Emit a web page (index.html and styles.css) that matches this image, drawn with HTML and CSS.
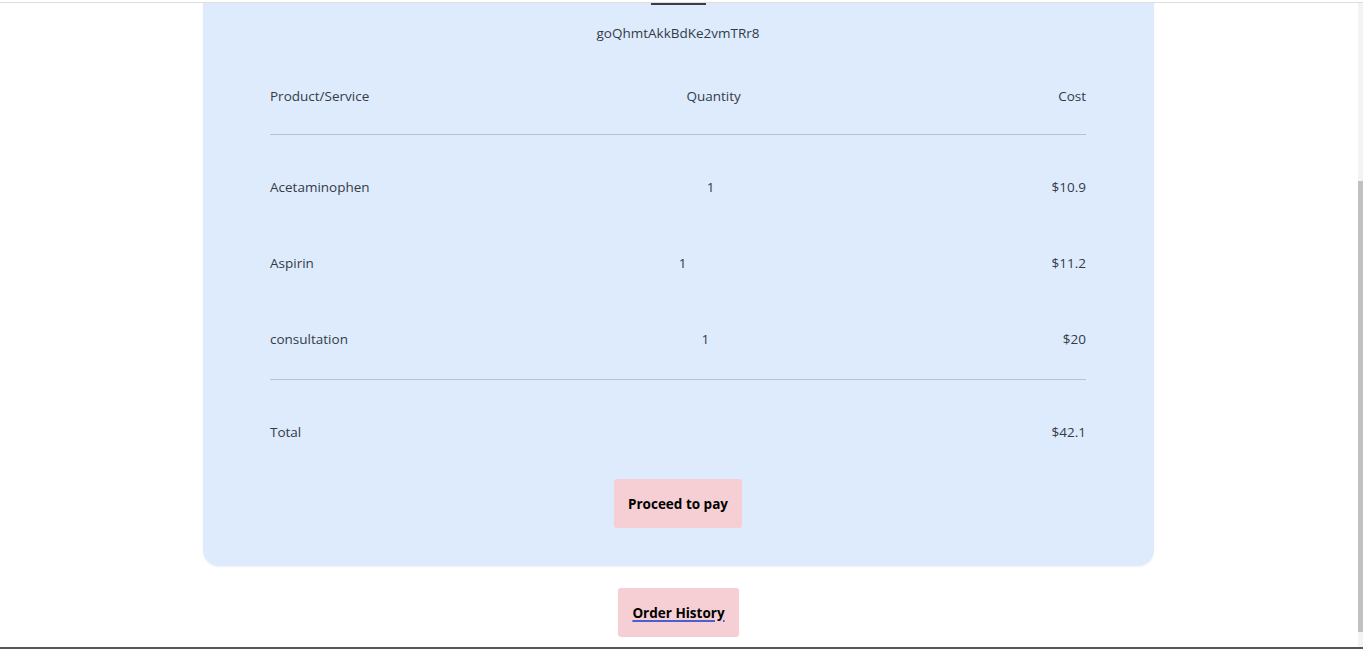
FILE: index.html
```html
<!DOCTYPE html>
<html lang="en">
<head>
<meta charset="utf-8">
<title>Order</title>
<link rel="stylesheet" href="styles.css">
</head>
<body>
<div class="viewport">
  <main class="page">
    <section class="card">
      <div class="title-bar"></div>
      <p class="order-id">goQhmtAkkBdKe2vmTRr8</p>
      <div class="row head">
        <span>Product/Service</span>
        <span>Quantity</span>
        <span>Cost</span>
      </div>
      <div class="items">
        <div class="row item"><span>Acetaminophen</span><span>1</span><span>$10.9</span></div>
        <div class="row item"><span>Aspirin</span><span>1</span><span>$11.2</span></div>
        <div class="row item"><span>consultation</span><span>1</span><span>$20</span></div>
      </div>
      <div class="row total"><span>Total</span><span>$42.1</span></div>
      <button class="btn pay" type="button">Proceed to pay</button>
    </section>
    <a class="btn history" href="#">Order History</a>
  </main>
  <div class="scrollbar"><div class="thumb"></div></div>
</div>
</body>
</html>
```

FILE: styles.css
```css
html, body {
  margin: 0;
  padding: 0;
  background: #ffffff;
  overflow: hidden;
}

body {
  font-family: "Open Sans", "Noto Sans", sans-serif;
  color: #333b46;
}

.viewport {
  position: relative;
  margin-top: 2px;
  height: 644px;
  border-top: 1px solid #dedede;
  border-bottom: 2px solid #555555;
  overflow: hidden;
}

.page {
  width: 1357px;
  display: flex;
  flex-direction: column;
  align-items: center;
}

.card {
  width: 816px;
  padding: 0 68px 38px 67px;
  background: #deebfd;
  border-radius: 0 0 16px 16px;
  box-shadow: 0 1px 2px rgba(120, 140, 170, 0.12);
  display: flex;
  flex-direction: column;
  align-items: stretch;
}

.title-bar {
  align-self: center;
  width: 55px;
  height: 2px;
  background: #3a3f47;
}

.order-id {
  margin: 18px 0 0;
  font-size: 13.5px;
  line-height: 20px;
  text-align: center;
}

.row {
  display: flex;
  justify-content: space-between;
  align-items: center;
  font-size: 13.5px;
  line-height: 20px;
}

.head {
  margin-top: 15px;
  height: 76px;
  border-bottom: 1px solid #b8c4d2;
}

.items {
  padding: 14px 0 2px;
  border-bottom: 1px solid #b8c4d2;
}

.item {
  height: 76px;
}

.total {
  margin-top: 14px;
  height: 76px;
}

.btn {
  display: flex;
  align-items: center;
  justify-content: center;
  height: 49px;
  padding: 0 14px;
  border: 0;
  border-radius: 3px;
  background: #f5cfd3;
  color: #000000;
  font-family: "Open Sans", "Noto Sans", sans-serif;
  font-size: 13.5px;
  font-weight: 700;
  box-sizing: border-box;
}

.pay {
  align-self: center;
  margin-top: 9px;
}

.history {
  margin-top: 22px;
  text-decoration: underline;
  text-decoration-color: #4a5fd0;
  text-decoration-thickness: 2px;
  text-underline-offset: 2px;
}

.scrollbar {
  position: absolute;
  top: 0;
  right: 0;
  width: 5px;
  height: 100%;
  background: #f3f3f3;
}

.thumb {
  position: absolute;
  top: 178px;
  left: 0;
  width: 5px;
  height: 451px;
  background: #c1c1c1;
}
```
